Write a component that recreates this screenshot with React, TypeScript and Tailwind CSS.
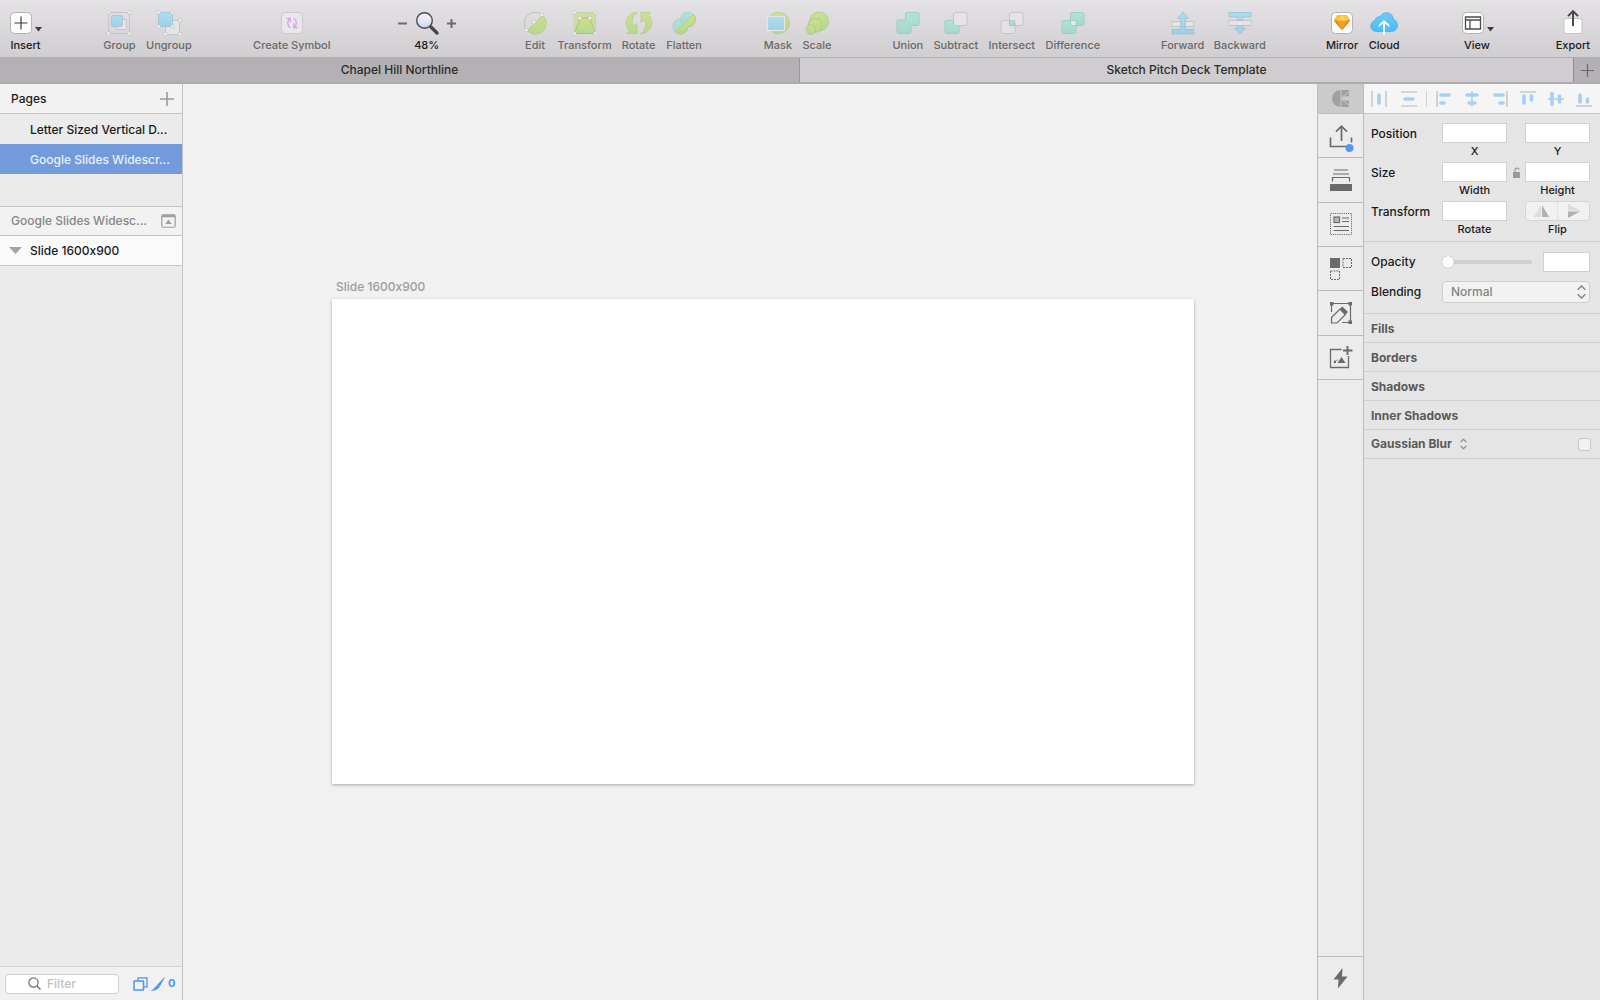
import type { ReactNode } from 'react'

type Tool = {
  label: string
  width: string
  icon: ReactNode
  active?: boolean
}

const Svg = ({ w = 24, h = 24, children }: { w?: number; h?: number; children: ReactNode }) => (
  <svg width={w} height={h} viewBox={`0 0 ${w} ${h}`} fill="none" className="shrink-0" aria-hidden="true">
    {children}
  </svg>
)

const Handles = ({ points, stroke = '#c4c2c4' }: { points: number[][]; stroke?: string }) => (
  <>
    {points.map(([x, y]) => (
      <rect key={`${x}-${y}`} x={x - 1.5} y={y - 1.5} width="3" height="3" fill="#f4f4f4" stroke={stroke} strokeWidth="0.6" />
    ))}
  </>
)

const Caret = () => (
  <svg width="7" height="5" viewBox="0 0 7 5" className="mt-3" aria-hidden="true">
    <path d="M0 0h7L3.5 4.6z" fill="#3c3c3c" />
  </svg>
)

const Gradients = () => (
  <svg width="0" height="0" className="absolute" aria-hidden="true">
    <defs>
      <linearGradient id="green" x1="0" y1="0" x2="0" y2="1">
        <stop offset="0" stopColor="#cde08c" />
        <stop offset="1" stopColor="#b5d88d" />
      </linearGradient>
      <linearGradient id="blue" x1="0" y1="0" x2="0" y2="1">
        <stop offset="0" stopColor="#addcec" />
        <stop offset="1" stopColor="#9ed0ea" />
      </linearGradient>
      <linearGradient id="teal" x1="0" y1="0" x2="0" y2="1">
        <stop offset="0" stopColor="#b0e4d9" />
        <stop offset="1" stopColor="#a5d8cc" />
      </linearGradient>
      <linearGradient id="cloud" x1="0" y1="0" x2="0" y2="1">
        <stop offset="0" stopColor="#6fcbf7" />
        <stop offset="1" stopColor="#4abcf8" />
      </linearGradient>
      <linearGradient id="lens" x1="0" y1="0" x2="0" y2="1">
        <stop offset="0" stopColor="#f4f4f6" />
        <stop offset="0.55" stopColor="#e6e8ee" />
        <stop offset="1" stopColor="#b9d2f5" />
      </linearGradient>
    </defs>
  </svg>
)

const Tile = ({ children, faded }: { children: ReactNode; faded?: boolean }) => (
  <Svg>
    <rect x="1.5" y="1.5" width="21" height="21" rx="4" fill={faded ? '#e9e7ea' : '#fcfcfc'} stroke={faded ? '#cbc9cc' : '#b5b3b5'} />
    {children}
  </Svg>
)

const icons = {
  insert: (
    <Tile>
      <path d="M12 5.5v13M5.5 12h13" stroke="#3c3c3c" strokeWidth="1.2" />
    </Tile>
  ),
  group: (
    <Svg>
      <rect x="1.5" y="1.5" width="21" height="21" stroke="#c6c4c6" />
      <rect x="9.5" y="8.5" width="10" height="10" rx="1.5" fill="#e6e4e6" stroke="#c6c4c6" />
      <rect x="4.5" y="4.5" width="11" height="11" rx="1.5" fill="url(#blue)" stroke="#a2bfce" strokeWidth="0.7" />
      <Handles points={[[1.5, 1.5], [22.5, 1.5], [1.5, 22.5], [22.5, 22.5]]} />
    </Svg>
  ),
  ungroup: (
    <Svg w={26}>
      <rect x="9.5" y="9.5" width="14" height="14" fill="#e6e4e6" stroke="#c6c4c6" />
      <rect x="2.5" y="1.5" width="14" height="14" fill="url(#blue)" stroke="#a2bfce" strokeWidth="0.7" />
      <Handles points={[[2.5, 1.5], [16.5, 1.5], [2.5, 15.5], [16.5, 15.5], [24, 9.5], [9.5, 23], [24, 23]]} />
    </Svg>
  ),
  symbol: (
    <Tile faded>
      <path d="M6.5 7.5h3.800v4M10 7.500c-3 2.500-3.200 6.500 .2 9.500M17.500 16.500h-3.800v-4M14 16.500c3-2.500 3.200-6.500-.2-9.500" stroke="#d6a5e2" strokeWidth="1.3" />
    </Tile>
  ),
  edit: (
    <Svg>
      <circle cx="12" cy="12" r="10.8" stroke="#b9b7b9" strokeWidth="0.8" />
      <path d="M19.7 4.3A10.9 10.9 0 1 1 4.3 19.7z" fill="url(#green)" stroke="#abc584" strokeWidth="0.6" />
      <Handles points={[[19, 4], [11, 11], [3.5, 19]]} />
    </Svg>
  ),
  transform: (
    <Svg>
      <rect x="1.5" y="1.5" width="21" height="21" fill="#cfdda5" stroke="#c2d09c" strokeWidth="0.7" />
      <path d="M7 7h10l5.500 15.500h-21z" fill="url(#green)" stroke="#a3bd7c" strokeWidth="0.8" />
      <Handles points={[[1.5, 1.5], [22.5, 1.5], [7, 7], [17, 7], [1.5, 22.5], [22.5, 22.5]]} />
    </Svg>
  ),
  rotate: (
    <Svg w={28}>
      <path d="M12.500 1C2 2-2.500 13 4.500 19.500L2.500 22.500H12V12.500L9 15.500C5.500 11.500 7 5 12.500 1z" fill="url(#green)" stroke="#abc584" strokeWidth="0.6" />
      <path d="M15.500 23C26 22 30.500 11 23.500 4.500L25.500 1.500H16V11.500L19 8.500C22.500 12.500 21 19 15.500 23z" fill="url(#green)" stroke="#abc584" strokeWidth="0.6" />
    </Svg>
  ),
  flatten: (
    <Svg>
      <circle cx="8.500" cy="15.500" r="7.500" fill="url(#teal)" stroke="#97c9bd" strokeWidth="0.6" />
      <circle cx="16" cy="8.500" r="7.500" fill="url(#teal)" stroke="#97c9bd" strokeWidth="0.6" />
      <path d="M21.500 3.400c3.800 4.200 2 11.200-5.500 12.300-.800 6.700-8 9.600-12.800 5.200z" fill="url(#green)" stroke="#abc584" strokeWidth="0.6" />
    </Svg>
  ),
  mask: (
    <Svg>
      <circle cx="12.500" cy="12" r="10.800" fill="url(#green)" stroke="#abc584" strokeWidth="0.6" />
      <rect x="1.500" y="5.500" width="17" height="14" fill="url(#blue)" stroke="#e4e6e4" strokeWidth="1.200" />
    </Svg>
  ),
  scale: (
    <Svg>
      <circle cx="14" cy="10.500" r="9.500" fill="url(#green)" stroke="#a3bd7c" strokeWidth="0.600" />
      <circle cx="10" cy="14.500" r="7" fill="url(#green)" stroke="#a3bd7c" strokeWidth="0.600" />
      <circle cx="6" cy="18.500" r="4.800" fill="url(#green)" stroke="#a3bd7c" strokeWidth="0.600" />
    </Svg>
  ),
  union: (
    <Svg>
      <path d="M9.500 3q0-1.500 1.500-1.500h10.500q1.500 0 1.500 1.500v10q0 1.500-1.500 1.500H15v6.500q0 1.500-1.500 1.500H2.500Q1 22.500 1 21V10.500Q1 9 2.500 9h7z" fill="url(#teal)" stroke="#97c9bd" strokeWidth="0.800" />
    </Svg>
  ),
  subtract: (
    <Svg>
      <rect x="1" y="9.500" width="14" height="13" rx="1.500" fill="url(#teal)" stroke="#97c9bd" strokeWidth="0.800" />
      <rect x="9.500" y="1.500" width="13.500" height="13" rx="1.500" fill="#e6e4e6" stroke="#bfbdbf" strokeWidth="0.800" />
    </Svg>
  ),
  intersect: (
    <Svg>
      <rect x="1" y="9.500" width="14" height="13" rx="1.500" fill="#e3e1e3" stroke="#bfbdbf" strokeWidth="0.800" />
      <rect x="9.500" y="1.500" width="13.500" height="13" rx="1.500" fill="#e6e4e6" stroke="#bfbdbf" strokeWidth="0.800" />
      <path d="M9.500 9.500h4q1.500 0 1.500 1.500v3.500h-4q-1.500 0-1.500-1.500z" fill="url(#teal)" stroke="#97c9bd" strokeWidth="0.800" />
    </Svg>
  ),
  difference: (
    <Svg>
      <rect x="1" y="9.500" width="14" height="13" rx="1.500" fill="url(#teal)" stroke="#97c9bd" strokeWidth="0.800" />
      <rect x="9.500" y="1.500" width="13.500" height="13" rx="1.500" fill="url(#teal)" stroke="#97c9bd" strokeWidth="0.800" />
      <rect x="9.500" y="9.500" width="5.500" height="5" rx="0.500" fill="#ebe9eb" stroke="#97c9bd" strokeWidth="0.800" />
    </Svg>
  ),
  forward: (
    <Svg>
      <rect x="1" y="10.500" width="22" height="5" fill="#e6e4e6" stroke="#c0bec0" strokeWidth="0.800" />
      <path d="M12 .800l5.500 6.700h-3.300v11h8.800v4.500H1v-4.500h8.800v-11H6.500z" fill="url(#blue)" stroke="#8fbfd8" strokeWidth="0.700" />
    </Svg>
  ),
  backward: (
    <Svg>
      <path d="M1 1.500h22V6h-8.800v11h3.300L12 23l-5.500-6h3.300V6H1z" fill="url(#blue)" stroke="#8fbfd8" strokeWidth="0.700" />
      <rect x="1" y="9.500" width="22" height="5" fill="#e6e4e6" stroke="#c0bec0" strokeWidth="0.800" />
    </Svg>
  ),
  mirror: (
    <Tile>
      <path d="M7 4.500l5-.6 5 .6 3.200 5L12 19.200 3.800 9.500z" fill="#f2a126" />
      <path d="M7 4.500l5-.6-4.700 5.600H3.800zM17 4.500l-5-.6 4.700 5.600h3.500z" fill="#f9c33f" />
      <path d="M12 3.900L7.300 9.500h9.400z" fill="#fbd75a" />
      <path d="M3.800 9.500h3.500L12 19.200zM20.200 9.500h-3.500L12 19.200z" fill="#e68a16" />
    </Tile>
  ),
  cloud: (
    <Svg w={28}>
      <path d="M7 20.500C2.500 20.500.800 17.500.800 15c0-3 2-5 4.500-5.500C5.300 6.500 8 5.200 10.200 6 11.500 3 14 1.800 16.700 1.800c4 0 6.600 3 6.600 6.700 2.500.700 4.200 3 4.200 5.800 0 3.500-2.500 6.200-6 6.200z" fill="url(#cloud)" stroke="#3fa9e2" strokeWidth="0.700" />
      <path d="M14 24V10.500M8.800 15.200l5.200-5 5.200 5" stroke="#fff" strokeWidth="1.800" />
    </Svg>
  ),
  view: (
    <Tile>
      <path d="M4.500 6h15v12h-15zM4.500 9h15M9 9v9" stroke="#4c4c4c" strokeWidth="1.300" />
    </Tile>
  ),
  export: (
    <Svg>
      <rect x="3" y="7.500" width="18" height="15" rx="2" fill="#fcfcfc" stroke="#bdbbbd" strokeWidth="0.800" />
      <path d="M12 15V.500M7 5.200L12 0l5 5.200" stroke="#464446" strokeWidth="1.900" />
    </Svg>
  ),
}

const toolGroups: Tool[][] = [
  [
    { label: 'Group', width: 'w-[33px]', icon: icons.group },
    { label: 'Ungroup', width: 'w-[46px]', icon: icons.ungroup },
  ],
  [{ label: 'Create Symbol', width: 'w-[78px]', icon: icons.symbol }],
]

const editGroups: Tool[][] = [
  [
    { label: 'Edit', width: 'w-[25px]', icon: icons.edit },
    { label: 'Transform', width: 'w-[54px]', icon: icons.transform },
    { label: 'Rotate', width: 'w-[34px]', icon: icons.rotate },
    { label: 'Flatten', width: 'w-[37px]', icon: icons.flatten },
  ],
  [
    { label: 'Mask', width: 'w-[29px]', icon: icons.mask },
    { label: 'Scale', width: 'w-[29px]', icon: icons.scale },
  ],
  [
    { label: 'Union', width: 'w-[31px]', icon: icons.union },
    { label: 'Subtract', width: 'w-[45px]', icon: icons.subtract },
    { label: 'Intersect', width: 'w-[47px]', icon: icons.intersect },
    { label: 'Difference', width: 'w-[55px]', icon: icons.difference },
  ],
  [
    { label: 'Forward', width: 'w-[43px]', icon: icons.forward },
    { label: 'Backward', width: 'w-[51px]', icon: icons.backward },
  ],
  [
    { label: 'Mirror', width: 'w-[32px]', icon: icons.mirror, active: true },
    { label: 'Cloud', width: 'w-[32px]', icon: icons.cloud, active: true },
  ],
]

const ToolButton = ({ label, width, icon, active }: Tool) => (
  <button
    type="button"
    disabled={!active}
    className={`${width} flex flex-col items-center gap-0.5 whitespace-nowrap ${active ? 'text-[#1c1c1c]' : 'text-[#6a696b]'}`}
  >
    <span className="flex h-6 items-center gap-0.5 [&>svg]:overflow-visible">{icon}</span>
    <span className="leading-4">{label}</span>
  </button>
)

const ToolGroups = ({ groups }: { groups: Tool[][] }) => (
  <>
    {groups.map((group) => (
      <div key={group[0].label} className="flex gap-2.5">
        {group.map((tool) => (
          <ToolButton key={tool.label} {...tool} />
        ))}
      </div>
    ))}
  </>
)

function Toolbar() {
  return (
    <header className="flex h-[58px] shrink-0 items-start justify-between border-b border-[#b0aeb0] bg-linear-to-b from-[#e4e2e4] to-[#d0ced0] pt-[11px] pr-2 pl-[9px] text-[11px] font-medium">
      <ToolButton label="Insert" width="w-[33px]" icon={<>{icons.insert}<Caret /></>} active />
      <ToolGroups groups={toolGroups} />
      <div className="flex w-[70px] flex-col items-center gap-0.5 text-[#1c1c1c]">
        <div className="flex h-6 items-center gap-2">
          <button type="button" aria-label="Zoom out">
            <Svg w={9} h={9}><path d="M0 4.500h9" stroke="#6c6a6c" strokeWidth="2" /></Svg>
          </button>
          <Svg>
            <path d="M16 16l6 6" stroke="#464446" strokeWidth="3.200" strokeLinecap="round" />
            <circle cx="9.500" cy="9.500" r="7.800" fill="url(#lens)" stroke="#4c4a4c" strokeWidth="1.400" />
          </Svg>
          <button type="button" aria-label="Zoom in">
            <Svg w={9} h={9}><path d="M0 4.500h9M4.500 0v9" stroke="#6c6a6c" strokeWidth="2" /></Svg>
          </button>
        </div>
        <span className="leading-4">48%</span>
      </div>
      <ToolGroups groups={editGroups} />
      <ToolButton label="View" width="w-[32px]" icon={<>{icons.view}<Caret /></>} active />
      <ToolButton label="Export" width="w-[38px]" icon={icons.export} active />
    </header>
  )
}

function TabBar() {
  return (
    <nav className="flex h-[26px] shrink-0 border-b-2 border-[#adabad] text-xs font-medium text-[#2c2c2c]">
      <button type="button" className="w-1/2 border-r border-[#979597] bg-[#b3b1b3]">Chapel Hill Northline</button>
      <button type="button" className="flex-1 bg-[#cfcdcf]">Sketch Pitch Deck Template</button>
      <button type="button" aria-label="New tab" className="flex w-[27px] items-center justify-center border-l border-[#8e8c8e] bg-[#b3b1b3]">
        <Svg w={13} h={13}><path d="M6.500 0v13M0 6.500h13" stroke="#6a686a" strokeWidth="1.200" /></Svg>
      </button>
    </nav>
  )
}

function Sidebar() {
  return (
    <aside className="flex w-[183px] shrink-0 flex-col border-r border-[#c4c4c4] bg-[#ebebeb] text-xs font-medium text-[#1a1a1a]">
      <div className="flex h-[30px] items-center justify-between border-b border-[#c6c6c6] bg-[#f2f2f2] pr-2 pl-[11px]">
        <h2>Pages</h2>
        <button type="button" aria-label="Add page">
          <Svg w={14} h={14}><path d="M7 0v14M0 7h14" stroke="#9c9c9c" strokeWidth="1.600" /></Svg>
        </button>
      </div>
      <ul>
        <li className="h-[30px] truncate pr-2 pl-[30px] leading-8">Letter Sized Vertical D...</li>
        <li className="h-[30px] truncate bg-[#739bdc] pr-2 pl-[30px] leading-8 text-[#e9f0fb]">Google Slides Widescr...</li>
      </ul>
      <div className="mt-8 flex h-[30px] items-center justify-between border-y border-[#c6c6c6] bg-[#f2f2f2] pr-[6px] pl-[11px] text-[#868686]">
        <span className="truncate leading-7">Google Slides Widesc...</span>
        <button type="button" aria-label="Collapse pages">
          <Svg w={15} h={14}>
            <rect x="0.750" y="0.750" width="13.500" height="12.500" rx="1.500" stroke="#a0a0a0" strokeWidth="1.200" />
            <path d="M1 2h13" stroke="#a0a0a0" strokeWidth="2.500" />
            <path d="M7.500 5.500l3.200 4.500H4.300z" fill="#a0a0a0" />
          </Svg>
        </button>
      </div>
      <div className="flex h-[30px] items-center gap-2 border-b border-[#c6c6c6] bg-[#fafafa] pl-[9px]">
        <Svg w={13} h={7}><path d="M0 0h13L6.500 7z" fill="#a4a4a4" /></Svg>
        <span>Slide 1600x900</span>
      </div>
      <div className="mt-auto flex h-[34px] items-center border-t border-[#d2d2d2] bg-[#f1f1f1] pl-[5px]">
        <label className="flex h-5 w-[114px] items-center gap-1.5 rounded-[4px] border border-[#cfcfcf] bg-white pl-[22px]">
          <Svg w={13} h={13}>
            <circle cx="5.500" cy="5.500" r="4.600" stroke="#6c6c6c" strokeWidth="1.200" />
            <path d="M9 9l3.500 3.500" stroke="#6c6c6c" strokeWidth="1.400" />
          </Svg>
          <input type="text" placeholder="Filter" aria-label="Filter" className="w-16 outline-none placeholder:text-[#c0c0c0]" />
        </label>
        <div className="ml-[14px] flex items-center gap-[3px] text-[#4f93f5]">
          <Svg w={15} h={14}>
            <path d="M5 3.500V.800h9v9h-3" stroke="currentColor" strokeWidth="1.300" />
            <rect x="1" y="4" width="9.500" height="9" rx="0.500" stroke="currentColor" strokeWidth="1.500" />
          </Svg>
          <Svg w={14} h={14}>
            <path d="M13.500.500l-5 9-2-1.800zM6.300 8.200l2 1.800c-1.800 2.500-4.500 3.500-7.800 3.600 2.500-1 3.500-3.500 5.800-5.400z" fill="currentColor" stroke="currentColor" strokeWidth="0.600" />
          </Svg>
          <span className="text-[11px] font-bold">0</span>
        </div>
      </div>
    </aside>
  )
}

function Canvas() {
  return (
    <main className="min-w-0 flex-1 bg-[#f1f1f1] pt-[194px] pr-[123px] pl-[149px]">
      <p className="h-[21px] pl-1 text-xs leading-[18px] font-medium text-[#9b9d9b]">Slide 1600x900</p>
      <div className="aspect-video w-full bg-white shadow-[0_1px_3px_rgba(0,0,0,0.3)]" />
    </main>
  )
}

const plugins = [
  {
    name: 'Export assets',
    icon: (
      <Svg>
        <path d="M1.500 13.500v9h16M22.500 13.500v5" stroke="#6b6b6b" strokeWidth="1.700" />
        <path d="M12.500 17V2.500M7 7.700l5.500-5.500L18 7.700" stroke="#6b6b6b" strokeWidth="1.700" />
        <circle cx="20.500" cy="24" r="4" fill="#5694f8" />
      </Svg>
    ),
  },
  {
    name: 'Stack',
    icon: (
      <Svg>
        <path d="M5 2h14M4 6h16M3.500 13.500V9.500h17v4" stroke="#6b6b6b" strokeWidth="1.200" />
        <path d="M1 16h22v7H1z" fill="#6b6b6b" />
      </Svg>
    ),
  },
  {
    name: 'Content',
    icon: (
      <Svg>
        <rect x="1.500" y="1.500" width="21" height="21" stroke="#6b6b6b" strokeDasharray="1.200 1" />
        <rect x="5" y="5" width="5.500" height="5.500" fill="#b9b9b9" stroke="#6b6b6b" strokeWidth="1.200" />
        <path d="M13 6h7M13 9.500h7M4.500 14.500h15.500M4.500 18.500h15.500" stroke="#6b6b6b" strokeWidth="1.200" />
      </Svg>
    ),
  },
  {
    name: 'Duplicate',
    icon: (
      <Svg>
        <path d="M1 1h10v10H1z" fill="#6b6b6b" />
        <path d="M14 1.500h8.500v9H14zM1.500 14h9v8.500h-9z" stroke="#6b6b6b" strokeDasharray="2 1" />
      </Svg>
    ),
  },
  {
    name: 'Edit artboard',
    icon: (
      <Svg>
        <path d="M2.500 11V2.500h19v19H13M5 2.500h15" stroke="#6b6b6b" strokeWidth="1.200" />
        <path d="M1 1h3.500v3.500H1zM19.500 1H23v3.500h-3.500zM19.500 19.500H23V23h-3.500z" fill="#6b6b6b" />
        <path d="M2.500 16.500L11 8l5.500 5.500-8.500 8.500H2.500z" stroke="#6b6b6b" strokeWidth="1.200" />
        <path d="M10.500 8.300L13.300 5.500l5.700 5.500-3 3z" fill="#6b6b6b" />
      </Svg>
    ),
  },
  {
    name: 'Add image',
    icon: (
      <Svg>
        <path d="M12.500 4.500h-11v18h18V11" stroke="#6b6b6b" strokeWidth="1.300" />
        <path d="M18.500 1v9M14 5.500h9.500" stroke="#6b6b6b" strokeWidth="1.900" />
        <path d="M8.500 18l4-6 4 6zM4.500 18l1-3 1.500 1v2zM7.200 16l1.300-2v2z" fill="#6b6b6b" />
      </Svg>
    ),
  },
]

function PluginStrip() {
  return (
    <aside className="flex w-[47px] shrink-0 flex-col border-x border-[#bcbcbc] bg-[#ececec]">
      <button type="button" aria-label="Craft" className="flex h-[30px] items-center justify-center border-b border-[#c0c0c0] bg-[#cbcbcb]">
        <Svg w={17} h={17}>
          <path d="M8.500 0v17A8.500 8.500 0 0 1 8.500 0z" fill="#a0a0a0" />
          <path d="M9.500 0H17v6.500C13.500 6 11 6.800 9.500 8zM9.500 9c1.500 1.200 4 2 7.500 1.500V17H9.500z" fill="#a0a0a0" />
          <path d="M9 8.500C11.500 6 14 3.500 17 2M9 8.500c2.500 2.500 5 5 8 6.500" stroke="#cbcbcb" strokeWidth="1" />
        </Svg>
      </button>
      <div className="flex h-[266px] flex-col">
        {plugins.map(({ name, icon }) => (
          <button key={name} type="button" aria-label={name} className="flex flex-1 items-center justify-center border-b border-[#bcbcbc] [&>svg]:overflow-visible">
            {icon}
          </button>
        ))}
      </div>
      <button type="button" aria-label="Quick actions" className="mt-auto flex h-11 items-center justify-center border-t border-[#bcbcbc]">
        <Svg w={15} h={21}><path d="M9.500 0L.500 11.500h5L5 20.500l9.500-12H9z" fill="#6b6b6b" /></Svg>
      </button>
    </aside>
  )
}

const alignments = [
  { name: 'Align left', lines: 'M1 0v16', bars: 'M5 4h8M5 12h3' },
  { name: 'Align center', lines: 'M8 0v16', bars: 'M3 4h10M5 12h6' },
  { name: 'Align right', lines: 'M15 0v16', bars: 'M3 4h8M8 12h3' },
  { name: 'Align top', lines: 'M0 1h16', bars: 'M4 5v7M11.500 5v4' },
  { name: 'Align middle', lines: 'M0 8h16', bars: 'M4 2.500v11M11.500 5v6' },
  { name: 'Align bottom', lines: 'M0 15h16', bars: 'M4 4v7M11.500 8v3' },
]

const AlignButton = ({ name, lines, bars }: { name: string; lines: string; bars: string }) => (
  <button type="button" aria-label={name}>
    <Svg w={16} h={16}>
      <path d={lines} stroke="#bababa" strokeWidth="1.200" />
      <path d={bars} stroke="#a5cff6" strokeWidth="3.600" strokeLinecap="round" />
    </Svg>
  </button>
)

const Field = ({ id, label }: { id: string; label: string }) => (
  <div className="flex w-[65px] flex-col items-center pb-[3px]">
    <input id={id} type="text" className="h-5 w-full border border-[#d0d0d0] bg-white" />
    <label htmlFor={id} className="text-[11px] leading-4">{label}</label>
  </div>
)

const effects = ['Fills', 'Borders', 'Shadows', 'Inner Shadows']

const UpDown = ({ big }: { big?: boolean }) => (
  <svg width={big ? 9 : 7} height={big ? 14 : 12} viewBox="0 0 9 14" fill="none" className="pointer-events-none" aria-hidden="true">
    <path d="M.700 4.700l3.800-3.800 3.800 3.800M.700 9.300l3.800 3.800 3.800-3.800" stroke="#8a8a8a" strokeWidth="1.500" />
  </svg>
)

function Inspector() {
  return (
    <aside className="w-[236px] shrink-0 bg-[#e5e5e5] text-xs font-medium text-[#1a1a1a]">
      <div className="flex h-[30px] items-center border-b border-[#c6c6c6] bg-[#f5f5f5] pr-2 pl-[7px]">
        <div className="flex gap-[14px] border-r border-[#cfcfcf] pr-[9px]">
          <AlignButton name="Distribute horizontally" lines="M1 0v16M15 0v16" bars="M8 4v8" />
          <AlignButton name="Distribute vertically" lines="M0 1h16M0 15h16" bars="M4 8h8" />
        </div>
        <div className="flex flex-1 justify-between pl-[9px]">
          {alignments.map((alignment) => (
            <AlignButton key={alignment.name} {...alignment} />
          ))}
        </div>
      </div>

      <div className="border-b border-[#cfcfcf] pt-[9px] pr-[10px] pb-px pl-[7px]">
        <div className="flex">
          <span className="flex-1 leading-[22px]">Position</span>
          <Field id="x" label="X" />
          <span className="w-[18px]" />
          <Field id="y" label="Y" />
        </div>
        <div className="flex">
          <span className="flex-1 leading-[22px]">Size</span>
          <Field id="width" label="Width" />
          <button type="button" aria-label="Lock proportions" className="flex h-5 w-[18px] items-center justify-center">
            <Svg w={9} h={11}>
              <rect x="1" y="5" width="7" height="6" fill="#9a9a9a" />
              <path d="M3 5V2.700C3 .500 7 .500 7 2.700" stroke="#9a9a9a" strokeWidth="1.200" />
            </Svg>
          </button>
          <Field id="height" label="Height" />
        </div>
        <div className="flex">
          <span className="flex-1 leading-[22px]">Transform</span>
          <Field id="rotate" label="Rotate" />
          <span className="w-[18px]" />
          <div className="flex w-[65px] flex-col items-center">
            <div className="flex h-5 w-full divide-x divide-[#e2e2e2] rounded-[4px] border border-[#d4d4d4] bg-[#f1f1f1]">
              <button type="button" aria-label="Flip horizontally" className="flex flex-1 items-center justify-center">
                <Svg w={15} h={12}>
                  <path d="M7 0v12H0z" fill="#dcdcdc" />
                  <path d="M8 0v12h7z" fill="#b0b0b0" />
                </Svg>
              </button>
              <button type="button" aria-label="Flip vertically" className="flex flex-1 items-center justify-center">
                <Svg w={12} h={14}>
                  <path d="M0 0v6.500h12z" fill="#dcdcdc" />
                  <path d="M0 14V7.500h12z" fill="#b0b0b0" />
                </Svg>
              </button>
            </div>
            <span className="text-[11px] leading-4">Flip</span>
          </div>
        </div>
      </div>

      <div className="border-b border-[#cfcfcf] pt-[9px] pr-[10px] pb-[10px] pl-[7px]">
        <div className="flex h-[22px] items-center">
          <label htmlFor="opacity" className="w-[71px]">Opacity</label>
          <input
            id="opacity"
            type="range"
            defaultValue={0}
            className="h-3 w-[90px] appearance-none bg-transparent [&::-webkit-slider-runnable-track]:h-1 [&::-webkit-slider-runnable-track]:rounded-full [&::-webkit-slider-runnable-track]:bg-[#cfcfcf] [&::-webkit-slider-thumb]:-mt-1 [&::-webkit-slider-thumb]:h-3 [&::-webkit-slider-thumb]:w-3 [&::-webkit-slider-thumb]:appearance-none [&::-webkit-slider-thumb]:rounded-full [&::-webkit-slider-thumb]:bg-[#fbfbfb] [&::-webkit-slider-thumb]:shadow-[0_0_1px_rgba(0,0,0,0.4)]"
          />
          <input type="text" aria-label="Opacity value" className="ml-auto h-5 w-[47px] border border-[#d0d0d0] bg-white" />
        </div>
        <div className="mt-2 flex h-[22px] items-center">
          <label htmlFor="blending" className="w-[71px]">Blending</label>
          <div className="relative flex-1">
            <select id="blending" className="h-[22px] w-full appearance-none rounded-[4px] border border-[#d0d0d0] bg-[#f2f2f2] pl-2 text-[#858585]">
              <option>Normal</option>
            </select>
            <span className="pointer-events-none absolute inset-y-0 right-1 flex items-center">
              <UpDown big />
            </span>
          </div>
        </div>
      </div>

      {effects.map((effect) => (
        <h3 key={effect} className="h-[29px] border-b border-[#cfcfcf] pl-[7px] leading-[29px] font-bold text-[#5a5a5a]">{effect}</h3>
      ))}
      <div className="flex h-[29px] items-center border-b border-[#cfcfcf] pr-[9px] pl-[7px]">
        <label htmlFor="blur" className="font-bold text-[#5a5a5a]">Gaussian Blur</label>
        <span className="ml-2"><UpDown /></span>
        <input id="blur" type="checkbox" className="ml-auto h-[13px] w-[13px] appearance-none rounded-[3px] border border-[#c8c8c8] bg-[#f1f1f1]" />
      </div>
    </aside>
  )
}

export default function App() {
  return (
    <div className="flex h-screen flex-col overflow-hidden font-['Inter','Liberation_Sans',sans-serif] [font-feature-settings:'calt'_0]">
      <Gradients />
      <Toolbar />
      <TabBar />
      <div className="flex min-h-0 flex-1">
        <Sidebar />
        <Canvas />
        <PluginStrip />
        <Inspector />
      </div>
    </div>
  )
}
